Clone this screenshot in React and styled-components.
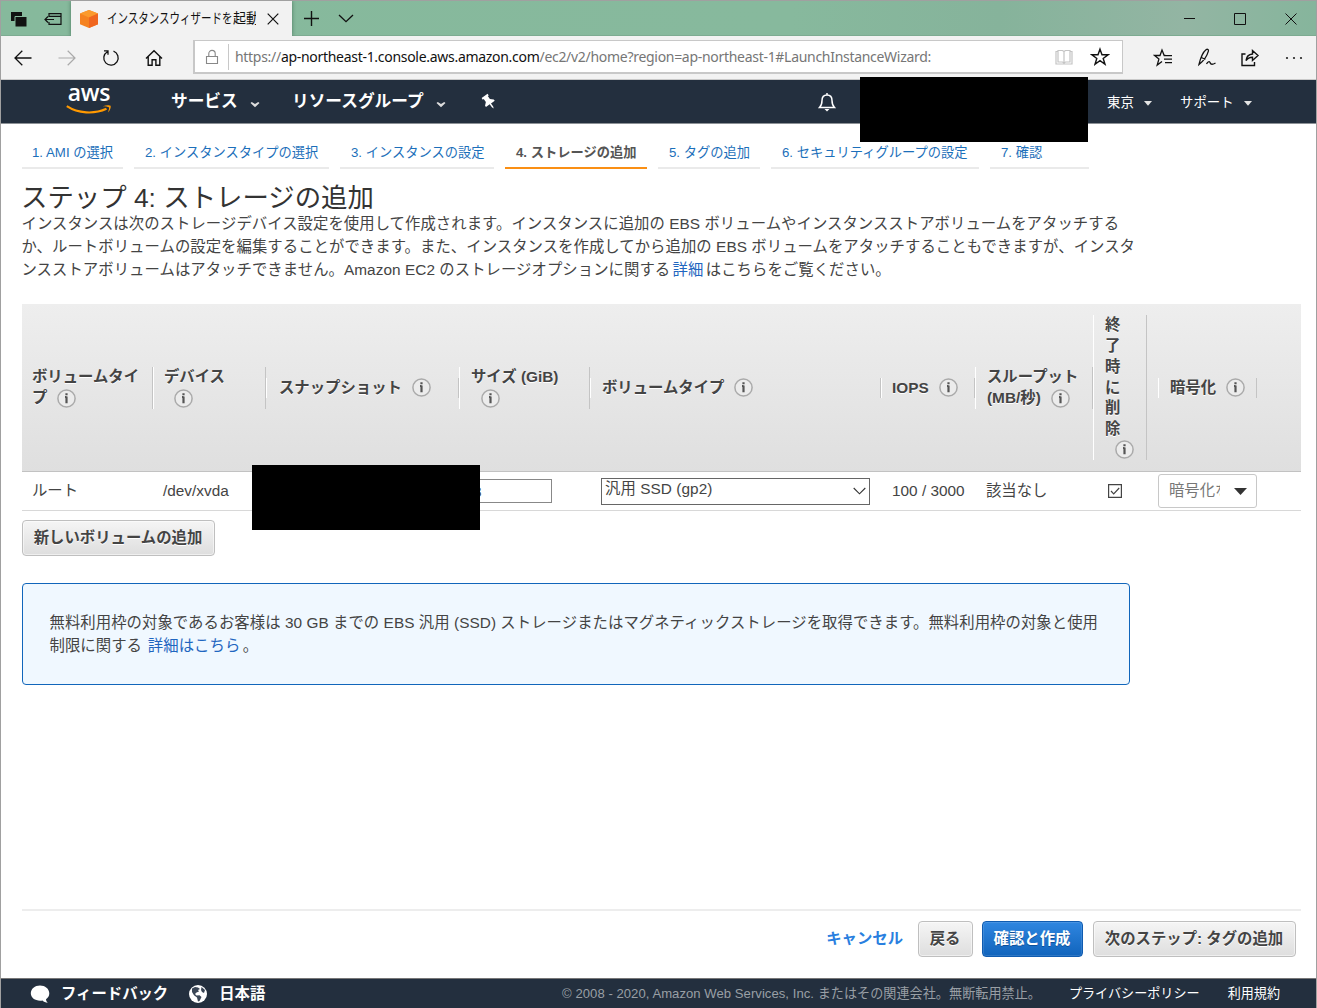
import React from 'react';
import styled, { createGlobalStyle } from 'styled-components';

const GlobalStyle = createGlobalStyle`
  * { box-sizing: border-box; }
  body { margin: 0; background: #fff; overflow: hidden; }
`;

const sans = `"Liberation Sans", "Noto Sans CJK JP", sans-serif`;

const Window = styled.div`
  position: relative;
  display: flex;
  flex-direction: column;
  width: 1317px;
  height: 1008px;
  border: 1px solid #a0a0a0;
  border-bottom: 0;
  background: #fff;
  color: #444;
  font: 15.36px/22.8px ${sans};
  white-space: nowrap;
  overflow: hidden;
`;

/* browser chrome */
const TitleBar = styled.div`
  display: flex;
  flex: none;
  height: 35px;
  background: linear-gradient(90deg, #86b99c 0%, #87b99d 60%, #86b39b 76%, #93b5a3 90%, #86b59c 100%);
  box-shadow: inset 0 -1px #7dab91;
`;
const TabTools = styled.div`
  display: flex;
  width: 70px;
  padding-left: 1px;
`;
const Slot = styled.div`
  display: flex;
  flex: none;
  align-items: center;
  justify-content: center;
  width: ${(p) => p.$w}px;
`;
const Tab = styled.div`
  display: flex;
  align-items: center;
  width: 221px;
  padding-left: 9px;
  background: #f2f2f2;
  box-shadow: 0 0 4px rgba(0, 40, 20, 0.45);
  clip-path: inset(0 -5px 0 -5px);
`;
const TabTitle = styled.div`
  display: flex;
  width: 149px;
  margin: -3px 0 0 9px;
  overflow: hidden;
  color: #111;
  font: 14px/22px "Noto Sans CJK JP", sans-serif;
`;
const Condensed = styled.span`
  flex: none;
  width: ${(p) => p.$w}px;
  transform: scaleX(${(p) => p.$scale});
  transform-origin: 0 50%;
`;
const Spacer = styled.div`
  flex: 1;
`;
const Toolbar = styled.div`
  display: flex;
  flex: none;
  height: 44px;
  background: #f2f2f2;
  border-bottom: 1px solid #c9c9c9;
`;
const Address = styled.div`
  display: flex;
  align-items: center;
  width: 930px;
  height: 34px;
  margin: 4px 18px 0 16px;
  border: 2px solid #c8c8c8;
  border-width: 1px 1px 2px 2px;
  background: #fff;
`;
const Divider = styled.div`
  width: 1px;
  height: 26px;
  margin-right: 6px;
  background: #c8c8c8;
`;
const Url = styled.div`
  flex: 1;
  padding-top: 1px;
  color: #767676;
  font: 14px/20px "Noto Sans", sans-serif;
  letter-spacing: -0.295px;
`;
const Host = styled.span`
  color: #111;
`;

/* console navigation */
const Nav = styled.div`
  display: flex;
  flex: none;
  align-items: center;
  height: 44px;
  background: #232f3e;
  border-bottom: 1px solid #8c9196;
  color: #fff;
`;
const Logo = styled.div`
  display: flex;
  flex-direction: column;
  width: 46px;
  margin: -3px 59px 0 65px;
  align-items: center;
`;
const LogoText = styled.span`
  height: 20px;
  font: 600 23px/16px "Open Sans", sans-serif;
  letter-spacing: -0.3px;
`;
const NavItem = styled.div`
  display: flex;
  align-items: center;
  width: ${(p) => p.$w}px;
  gap: ${(p) => (p.$small ? 10 : 12)}px;
  padding-top: ${(p) => (p.$small ? 4 : 2)}px;
  font-size: ${(p) => (p.$small ? 13.4 : 16.7)}px;
  font-weight: ${(p) => (p.$small ? 400 : 700)};
`;
const Redaction = styled.div`
  position: absolute;
  left: ${(p) => p.$x}px;
  top: ${(p) => p.$y}px;
  width: 228px;
  height: 65px;
  background: #000;
`;

/* wizard */
const Main = styled.main`
  display: flex;
  flex: 1;
  flex-direction: column;
  align-items: flex-start;
  padding: 0 15px 0 21px;
`;
const Steps = styled.div`
  display: flex;
  gap: 11px;
  height: 45px;
  padding-top: 15px;
`;
const Step = styled.div`
  width: ${(p) => p.$w}px;
  height: 30px;
  padding-left: ${(p) => p.$pad || 11}px;
  border-bottom: 2px solid ${(p) => (p.$active ? '#fa8f14' : '#eaeaea')};
  color: ${(p) => (p.$active ? '#555' : '#1c6fba')};
  font-size: 13.25px;
  font-weight: ${(p) => (p.$active ? 700 : 400)};
  line-height: 28px;
`;
const Title = styled.h1`
  margin: 15px 0 0 -1px;
  height: 29px;
  color: #333;
  font-size: 26.4px;
  font-weight: 400;
  line-height: 29px;
`;
const Line = styled.div`
  letter-spacing: 0.055px;
  text-indent: -0.5px;
`;
const Link = styled.a`
  margin: 0 ${(p) => p.$after || 0}px 0 ${(p) => p.$before || 0}px;
  color: #1f66c0;
`;
const columns = '131px 113px 193px 131px 291px 94px 118px 54px 11px 99px 1fr';
const HeadRow = styled.div`
  display: grid;
  grid-template-columns: ${columns};
  align-items: center;
  width: 1279px;
  height: 168px;
  margin-top: 23px;
  border-bottom: 1px solid #c2c2c2;
  background: linear-gradient(#eee, #dfdfdf);
`;
const HeadCell = styled.div`
  padding-left: ${(p) => p.$pad}px;
  border-left: 1px solid ${(p) => (p.$first ? 'transparent' : '#fff')};
  border-right: 1px solid #c4c4c4;
  color: #444;
  font-weight: 700;
  line-height: 20.7px;
`;
const HeadLine = styled.div`
  display: flex;
  align-items: center;
  height: 20.7px;
  text-shadow: 0 1px #fff;
`;
const InfoDot = styled.svg`
  flex: none;
  width: 19px;
  height: 19px;
  margin-left: 10px;
`;
const Row = styled.div`
  display: grid;
  grid-template-columns: ${columns};
  align-items: center;
  width: 1279px;
  height: 39px;
  border-bottom: 1px solid #d8d8d8;
`;
const Cell = styled.div`
  display: flex;
  padding-left: ${(p) => p.$pad ?? 10}px;
`;
const SizeInput = styled.div`
  width: 82px;
  height: 24px;
  margin-left: 11px;
  padding-left: 2px;
  border: 1px solid #888;
  line-height: 23px;
`;
const Select = styled.div`
  display: flex;
  align-items: center;
  justify-content: space-between;
  width: 269px;
  height: 27px;
  margin-left: 11px;
  padding: 0 3px 0 3px;
  border: 1px solid #666;
  letter-spacing: 0.06px;
`;
const SelectText = styled.span`
  padding-bottom: 5px;
  line-height: 20px;
`;
const KeyPicker = styled.div`
  display: flex;
  align-items: center;
  justify-content: space-between;
  width: 99px;
  height: 34px;
  padding: 0 9px 0 10px;
  border: 1px solid #c8c8c8;
  border-radius: 3px;
  color: #777;
`;
const KeyText = styled.span`
  width: 51px;
  overflow: hidden;
`;
const Button = styled.button`
  height: 36px;
  width: ${(p) => p.$w}px;
  padding: 0 1px 1px 0;
  border: 1px solid ${(p) => (p.$primary ? '#0f5bb0' : '#bfbfbf')};
  border-radius: 4px;
  background: ${(p) => (p.$primary ? 'linear-gradient(#2f86e0, #1164bc)' : 'linear-gradient(#f5f5f5, #dedede)')};
  box-shadow: inset 0 0 0 1px ${(p) => (p.$primary ? 'rgba(255,255,255,.12)' : 'rgba(255,255,255,.5)')};
  color: ${(p) => (p.$primary ? '#fff' : '#444')};
  font: 700 15.36px/22px ${sans};
  text-shadow: ${(p) => (p.$primary ? '0 1px #0d4f99' : '0 1px #fff')};
`;
const AddRow = styled.div`
  height: 72px;
  padding-top: 9px;
`;
const Notice = styled.div`
  width: 1108px;
  height: 102px;
  padding: 28px 0 0 27px;
  border: 1px solid #1166bb;
  border-radius: 4px;
  background: #f0f8ff;
`;
const Actions = styled.div`
  display: flex;
  align-items: center;
  justify-content: flex-end;
  width: 1279px;
  height: 69px;
  margin-top: auto;
  padding: 0 5px 11px 0;
  border-top: 2px solid #ededed;
  gap: 10px;
`;
const Cancel = styled.a`
  margin-right: 5px;
  color: #2a7fdf;
  font-weight: 700;
`;
const ButtonPair = styled.div`
  display: flex;
  gap: 9px;
`;
const Footer = styled.footer`
  display: flex;
  flex: none;
  align-items: center;
  height: 30px;
  padding: 2px 36px 0 29px;
  border-top: 1px solid #777;
  background: #232f3e;
  color: #fff;
  font-size: 13.1px;
`;
const FooterLink = styled.span`
  display: flex;
  align-items: center;
  gap: 11px;
  margin-right: 20px;
  font-size: 15.36px;
  font-weight: 700;
`;
const Copyright = styled.span`
  color: #999fa5;
  letter-spacing: 0.04px;
`;
const Policy = styled.span`
  margin-left: 28px;
`;

function Glyph({ w = 20, h = 20, sw = 1.2, c = '#111', fill = 'none', children }) {
  return (
    <svg width={w} height={h} viewBox={`0 0 ${w} ${h}`} fill={fill} stroke={c} strokeWidth={sw}>
      {children}
    </svg>
  );
}
const Info = () => (
  <InfoDot viewBox="0 0 19 19">
    <circle cx="9.5" cy="9.5" r="8.6" fill="#ececec" stroke="#aaa" strokeWidth="1.5" />
    <path d="M9.5 4.3v2M9.5 7.5v6.8M8 8h1.500" stroke="#555" strokeWidth="2.2" />
  </InfoDot>
);
const starPath = 'M10 2.2 12 7.8h6l-4.8 3.6 1.8 5.8-5-3.5-5 3.5 1.8-5.8L2 7.8h6z';
const Caret = () => (
  <svg width="8" height="5" viewBox="0 0 8 5"><path d="M0 0h8L4 4.7z" fill="#e4e4e4" /></svg>
);
const NavCaret = () => (
  <NavCaretSvg width="10" height="7" viewBox="0 0 10 7">
    <path d="M.5 2 5 6.2 9.5 2 8.2 1 5 3 1.800 1z" fill="#ddd" />
  </NavCaretSvg>
);
const NavCaretSvg = styled.svg`
  margin-top: 4px;
`;

const heads = [
  { pad: 9, lines: ['ボリュームタイ', 'プ'] },
  { pad: 10, lines: ['デバイス', ''] },
  { pad: 12, lines: ['スナップショット'] },
  { pad: 11, lines: ['サイズ (GiB)', ''] },
  { pad: 11, lines: ['ボリュームタイプ'] },
  { pad: 10, lines: ['IOPS'] },
  { pad: 11, lines: ['スループット', '(MB/秒)'] },
  { pad: 11, lines: ['終', '了', '時', 'に', '削', '除', ''] },
  null,
  { pad: 11, lines: ['暗号化'] },
];
const steps = [
  ['1. AMI の選択', 101, 10],
  ['2. インスタンスタイプの選択', 195],
  ['3. インスタンスの設定', 154],
  ['4. ストレージの追加', 142],
  ['5. タグの追加', 102],
  ['6. セキュリティグループの設定', 208],
  ['7. 確認', 99],
];

export default function App() {
  return (
    <Window>
      <GlobalStyle />
      <TitleBar>
        <TabTools>
          <Slot $w={34}>
            <Glyph w={16} h={16} sw={0}>
              <path d="M0 1h11v9H0z" fill="#111" />
              <path d="M4 5.5h12V16H4z" fill="#111" stroke="#86b99c" strokeWidth="1" />
            </Glyph>
          </Slot>
          <Slot $w={34}>
            <Glyph w={18} h={14}>
              <path d="M5 5V1.6h12v10.8H5V10M5 4.4h12M1 7.5h9M4 4.5l-3 3 3 3" />
            </Glyph>
          </Slot>
        </TabTools>
        <Tab>
          <Glyph w={18} h={18} sw={0}>
            <path d="M9 0l9 3.6v10.6L9 18l-9-3.8V3.6z" fill="#f58220" />
            <path d="M9 0l9 3.6-9 3.8-9-3.8z" fill="#fb9a2c" />
            <path d="M9 7.4l9-3.8v10.6L9 18z" fill="#f0661f" />
          </Glyph>
          <TabTitle>
            <Condensed $w={126} $scale={0.75}>インスタンスウィザードを</Condensed>
            <Condensed $w={26} $scale={0.93}>起動</Condensed>
          </TabTitle>
          <Slot $w={34}><Glyph w={12} h={12}><path d="M.7.7l10.6 10.6M11.3.7L.7 11.3" /></Glyph></Slot>
        </Tab>
        <Slot $w={38}><Glyph w={15} h={15} sw={1.4}><path d="M7.5 0v15M0 7.5h15" /></Glyph></Slot>
        <Slot $w={31}><Glyph w={16} h={9} sw={1.3}><path d="M1 1l7 6.7L15 1" /></Glyph></Slot>
        <Spacer />
        <Slot $w={50}><Glyph w={11} h={11} sw={1}><path d="M0 5.5h11" /></Glyph></Slot>
        <Slot $w={51}><Glyph w={12} h={12} sw={1}><path d="M.5.5h11v11H.5z" /></Glyph></Slot>
        <Slot $w={51}><Glyph w={12} h={12} sw={1}><path d="M.5.5l11 11M11.5.5l-11 11" /></Glyph></Slot>
      </TitleBar>
      <Toolbar>
        <Slot $w={44}><Glyph w={18} h={16} sw={1.3}><path d="M1 8h16.5M8.3.8L1 8l7.3 7.2" /></Glyph></Slot>
        <Slot $w={44}><Glyph w={18} h={16} c="#aaa"><path d="M17 8H.5M9.7.8L17 8l-7.3 7.2" /></Glyph></Slot>
        <Slot $w={43}>
          <Glyph w={18} h={18} sw={1.3}><path d="M5.4 2.7A7.2 7.2 0 1 0 11.500 2.200M2 1.800h4v4" /></Glyph>
        </Slot>
        <Slot $w={44}>
          <Glyph w={18} h={18} sw={1.4}><path d="M1 9.5l8-7.7 8 7.7M3.2 7.8v8.4h3.9v-5.4h3.8v5.4h3.9V7.8" /></Glyph>
        </Slot>
        <Slot $w={1} />
        <Address>
          <Slot $w={33}>
            <Glyph w={14} h={16} c="#888" sw={1.1}><path d="M1.5 7.5h11v7h-11zM3.8 7.5V4.6a3.2 3.2 0 0 1 6.4 0v2.9" /></Glyph>
          </Slot>
          <Divider />
          <Url>https://<Host>ap-northeast-1.console.aws.amazon.com</Host>/ec2/v2/home?region=ap-northeast-1#LaunchInstanceWizard:</Url>
          <Slot $w={36}>
            <Glyph w={18} h={16} c="#c4c4c4">
              <path d="M3 1.5h4.500L9 2.500l1.500-1H15v11.500h-4.500L9 14l-1.500-1H3zM9 2.500V14M3 2.500H1V15h16V2.500h-2" />
            </Glyph>
          </Slot>
          <Slot $w={36}><Glyph sw={1.4}><path d={starPath} /></Glyph></Slot>
          <Slot $w={4} />
        </Address>
        <Slot $w={44}>
          <Glyph sw={1.3}><path d="M12.5 7.5h-1.300L9 2 7 7.5H1.500l4.400 3.600-1.700 5.900L9 13.500M12 7.700h7M11 11.200h8M12 14.700h7" /></Glyph>
        </Slot>
        <Slot $w={43}>
          <Glyph sw={1.3}>
            <path d="M2 16.500C3.500 10 6 4 9 1.700c1.500-1 3 0 2.300 1.700C10 8 6.500 13 2 16.500zM4.500 9.500l3.800 2M9.500 16c1.500-2.500 3-3 3.500-1.500s1.500 2.800 5.500.5" />
          </Glyph>
        </Slot>
        <Slot $w={44}>
          <Glyph sw={1.4}>
            <path d="M5.500 6H2v11.500h12.500V14M6 12.500C6.500 8.500 9 6.300 12.500 6V2.500L18 7.500l-5.500 5V9.300C9.500 9.300 7.500 10.300 6 12.500z" />
          </Glyph>
        </Slot>
        <Slot $w={44}>
          <Glyph w={18} h={4} sw={0}>
            <circle cx="2" cy="2" r="1.1" fill="#222" />
            <circle cx="9" cy="2" r="1.1" fill="#222" />
            <circle cx="16" cy="2" r="1.1" fill="#222" />
          </Glyph>
        </Slot>
      </Toolbar>
      <Nav>
        <Logo>
          <LogoText>aws</LogoText>
          <svg width="46" height="12" viewBox="0 0 46 12">
            <path d="M.8 2.200C12 9.500 28 10.500 40.500 4.800" fill="none" stroke="#f90" strokeWidth="2.2" />
            <path d="M37 2.200c3-1.200 6.500-1.200 7.500-.4.800 1.400-.6 5-2.600 6.700.8-2.400 1.600-4.400 1-5.200-.8-.7-3.300-.9-5.900-1.100z" fill="#f90" />
          </svg>
        </Logo>
        <NavItem $w={121}>サービス<NavCaret /></NavItem>
        <NavItem $w={188}>リソースグループ<NavCaret /></NavItem>
        <Glyph w={18} h={18} sw={0} fill="#fff">
          <path transform="rotate(-36 9 9)" d="M5.300 1.500h7.400v2h-1.200v3.600l2.900 2.600v1.600H9.800v3.700L9 17l-.8-2V11.300H3.600V9.700l2.900-2.600V3.500H5.300z" />
        </Glyph>
        <Spacer />
        <Glyph w={18} h={20} sw={1.5} c="#fff">
          <path d="M1.500 15.500c2-2 2.500-3.500 2.500-7C4 5 6 3 9 3s5 2 5 5.500c0 3.500.5 5 2.500 7zM9 1v2" />
          <path d="M6.500 17h5L9 19.500z" fill="#fff" stroke="none" />
        </Glyph>
        <Slot $w={271} />
        <NavItem $small $w={73}>東京<Caret /></NavItem>
        <NavItem $small $w={136}>サポート<Caret /></NavItem>
      </Nav>
      <Main>
        <Steps>
          {steps.map(([label, w, pad], i) => <Step key={label} $w={w} $pad={pad} $active={i === 3}>{label}</Step>)}
        </Steps>
        <Title>ステップ 4: ストレージの追加</Title>
        <Line>インスタンスは次のストレージデバイス設定を使用して作成されます。インスタンスに追加の EBS ボリュームやインスタンスストアボリュームをアタッチする</Line>
        <Line>か、ルートボリュームの設定を編集することができます。また、インスタンスを作成してから追加の EBS ボリュームをアタッチすることもできますが、インスタ</Line>
        <Line>ンスストアボリュームはアタッチできません。Amazon EC2 のストレージオプションに関する <Link $before={-2} $after={-2}>詳細</Link> はこちらをご覧ください。</Line>
        <HeadRow>
          {heads.map((head, c) => head ? (
            <HeadCell key={c} $first={c === 0} $pad={head.pad}>
              {head.lines.map((t, i) => <HeadLine key={i}>{t}{i === head.lines.length - 1 && <Info />}</HeadLine>)}
            </HeadCell>
          ) : <div key={c} />)}
        </HeadRow>
        <Row>
          <Cell>ルート</Cell>
          <Cell>/dev/xvda</Cell>
          <Cell />
          <SizeInput>8</SizeInput>
          <Select>
            <SelectText>汎用 SSD (gp2)</SelectText>
            <Glyph w={13} h={8} sw={1.1} c="#333"><path d="M.7 1l5.800 5.800L12.300 1" /></Glyph>
          </Select>
          <Cell $pad={11}>100 / 3000</Cell>
          <Cell $pad={11}>該当なし</Cell>
          <Cell $pad={15}>
            <Glyph w={14} h={14} sw={1.2} c="#444"><path d="M.6.6h12.800v12.800H.6zM3 7l2.700 2.800L11.200 4" /></Glyph>
          </Cell>
          <div />
          <KeyPicker>
            <KeyText>暗号化なし</KeyText>
            <svg width="13" height="7" viewBox="0 0 13 7"><path d="M0 0h13L6.500 7z" fill="#333" /></svg>
          </KeyPicker>
        </Row>
        <AddRow><Button $w={193}>新しいボリュームの追加</Button></AddRow>
        <Notice>
          <Line>無料利用枠の対象であるお客様は 30 GB までの EBS 汎用 (SSD) ストレージまたはマグネティックストレージを取得できます。無料利用枠の対象と使用</Line>
          <Line>制限に関する <Link $before={1.5} $after={-2}>詳細はこちら</Link> 。</Line>
        </Notice>
        <Actions>
          <Cancel>キャンセル</Cancel>
          <ButtonPair>
            <Button $w={55}>戻る</Button>
            <Button $w={101} $primary>確認と作成</Button>
          </ButtonPair>
          <Button $w={203}>次のステップ: タグの追加</Button>
        </Actions>
      </Main>
      <Footer>
        <FooterLink>
          <Glyph w={20} h={20} sw={0}>
            <path fill="#fff" d="M10 1.500c5 0 9.300 3.200 9.300 7.800 0 2.700-1.300 4.600-3.300 5.900.1 1.500.7 2.600 1.800 3.600-2.200-.1-4-1-5.300-2.300-6.200 1-11.700-2-11.700-7.200C.8 4.700 5 1.500 10 1.500z" />
          </Glyph>
          フィードバック
        </FooterLink>
        <FooterLink>
          <Glyph w={20} h={20} sw={0}>
            <circle cx="10" cy="10" r="9" fill="#fff" />
            <path d="M4 4.500l3-1.500 3 .5 2 1.500-2 1 1 1.500-2.500 1L7 10l1.500 1.500 3-.2 2 1.700-2 4-1.500.5-1-4-3-2.300L4 8zM13.500 3l3.500 3-1 3-2-1-1-2z" fill="#3a4656" />
          </Glyph>
          日本語
        </FooterLink>
        <Spacer />
        <Copyright>© 2008 - 2020, Amazon Web Services, Inc. またはその関連会社。無断転用禁止。</Copyright>
        <Policy>プライバシーポリシー</Policy>
        <Policy>利用規約</Policy>
      </Footer>
      <Redaction $x={859} $y={76} />
      <Redaction $x={251} $y={464} />
    </Window>
  );
}
